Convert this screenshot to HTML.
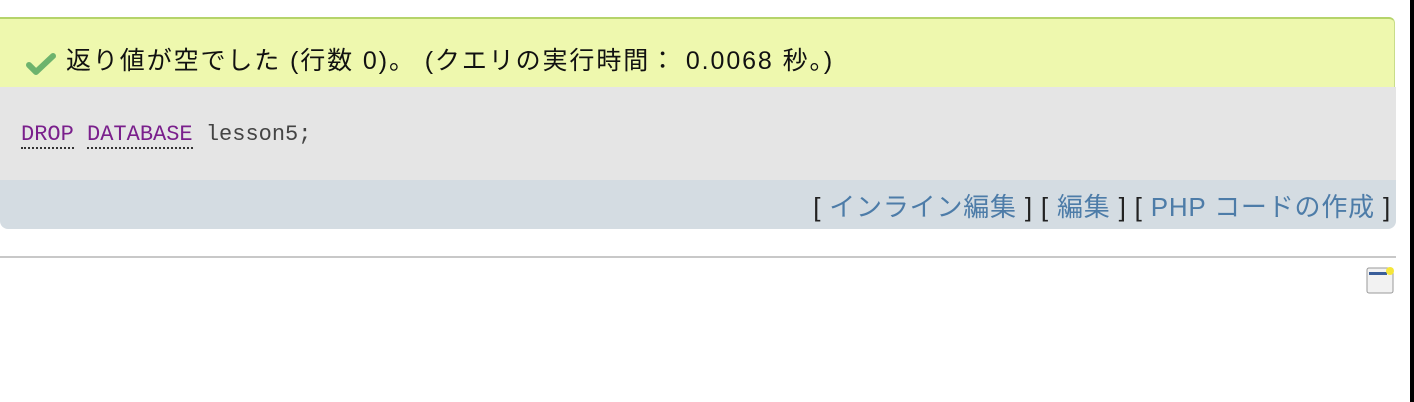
<!DOCTYPE html>
<html><head><style>
body{margin:0;width:1414px;height:402px;background:#fff;position:relative;overflow:hidden;font-family:"Liberation Sans","Noto Sans CJK JP",sans-serif;}
.msg{position:absolute;left:0;top:17px;width:1394px;height:68px;background:#eef8ae;border-top:2px solid #b5d46a;border-right:1px solid #c9dd8a;border-radius:0 6px 0 0;}
.msg span{position:absolute;left:66px;top:27px;font-size:25px;letter-spacing:1.9px;color:#111;line-height:30px;white-space:nowrap;}
.code{position:absolute;left:0;top:87px;width:1396px;height:93px;background:#e5e5e5;}
.code div{position:absolute;left:21px;top:35px;font-family:"Liberation Mono","DejaVu Sans Mono",monospace;font-size:22px;color:#444;white-space:nowrap;}
.kw{color:#7a1f8c;border-bottom:2px dotted #333;}
.foot{position:absolute;left:0;top:180px;width:1396px;height:49px;background:#d4dce2;border-radius:0 0 8px 8px;}
.foot div{position:absolute;right:5px;top:7px;font-size:26px;letter-spacing:0.8px;color:#222;white-space:nowrap;}
.foot a{color:#4d7ca8;text-decoration:none;}
.hr{position:absolute;left:0;top:256px;width:1396px;height:2px;background:#c8c8c8;}
.bar{position:absolute;right:0;top:0;width:4px;height:402px;background:#000;}
</style></head><body>
<div class="msg">
<svg style="position:absolute;left:26px;top:32px" width="30" height="26" viewBox="0 0 30 26"><path d="M3 14 L10 21 L27 5" stroke="#6db36d" stroke-width="6" fill="none" stroke-linecap="round" stroke-linejoin="round"/></svg>
<span>返り値が空でした (行数 0)。 (クエリの実行時間： 0.0068 秒。)</span></div>
<div class="code"><div><span class="kw">DROP</span> <span class="kw">DATABASE</span> lesson5;</div></div>
<div class="foot"><div>[ <a>インライン編集</a> ] [ <a>編集</a> ] [ <a>PHP コードの作成</a> ]</div></div>
<div class="hr"></div>
<svg style="position:absolute;left:1366px;top:266px" width="29" height="29" viewBox="0 0 29 29"><rect x="1" y="2" width="26" height="25" rx="2" fill="#f2f2f2" stroke="#999"/><rect x="3" y="6" width="18" height="3" fill="#3a5e9a"/><circle cx="24" cy="5" r="4" fill="#f5e63a"/></svg>
<div class="bar"></div>
</body></html>
